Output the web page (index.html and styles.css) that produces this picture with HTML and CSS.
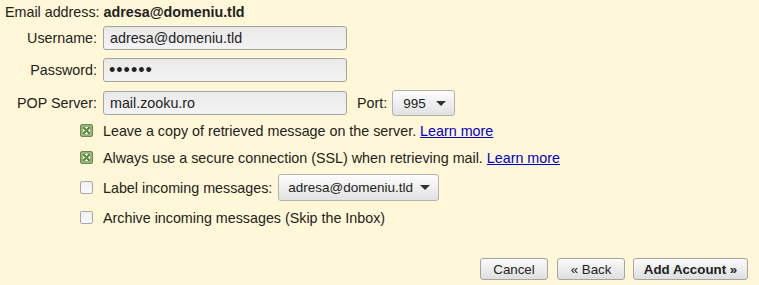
FILE: index.html
```html
<!DOCTYPE html>
<html lang="en">
<head>
    <meta charset="UTF-8">
    <title>Add POP account</title>
    <link rel="stylesheet" href="styles.css">
</head>
<body>
    <div class="form">
        <div class="email">Email address: <b>adresa@domeniu.tld</b></div>

        <div class="fields">
            <label>Username:</label>
            <input class="text" type="text" value="adresa@domeniu.tld">

            <label>Password:</label>
            <input class="text pass" type="password" value="secret">

            <label>POP Server:</label>
            <div class="server">
                <input class="text" type="text" value="mail.zooku.ro">
                <span class="port-label">Port:</span>
                <div class="dropdown port"><span>995</span><i class="arrow"></i></div>
            </div>
        </div>

        <div class="options">
            <div class="option">
                <span class="check checked"></span>
                <span>Leave a copy of retrieved message on the server. <a href="#">Learn more</a></span>
            </div>
            <div class="option">
                <span class="check checked"></span>
                <span>Always use a secure connection (SSL) when retrieving mail. <a href="#">Learn more</a></span>
            </div>
            <div class="option tall">
                <span class="check"></span>
                <span>Label incoming messages:</span>
                <div class="dropdown label-select"><span>adresa@domeniu.tld</span><i class="arrow"></i></div>
            </div>
            <div class="option">
                <span class="check"></span>
                <span>Archive incoming messages (Skip the Inbox)</span>
            </div>
        </div>

        <div class="buttons">
            <button class="btn cancel">Cancel</button>
            <button class="btn back">&laquo; Back</button>
            <button class="btn primary">Add Account &raquo;</button>
        </div>
    </div>
</body>
</html>
```

FILE: styles.css
```css
body {
    margin: 0;
    background-color: #fff7d7;
    font-family: "Liberation Sans", Arial, sans-serif;
    font-size: 14.3px;
    color: #222;
}

.form {
    padding: 4px 11px 0 5px;
}

.email {
    height: 16px;
    line-height: 16px;
}

.fields {
    display: grid;
    grid-template-columns: 92px auto;
    column-gap: 6px;
    row-gap: 8px;
    align-items: center;
    margin-top: 6px;
}

.fields label {
    text-align: right;
}

.text {
    width: 244px;
    height: 24px;
    box-sizing: border-box;
    margin: 0;
    padding: 0 6px;
    border: 1px solid #a3a3a3;
    border-radius: 3px;
    background: linear-gradient(#e9e9e9, #f4f4f4);
    font-family: inherit;
    font-size: 14.3px;
    color: #222;
}

.pass {
    font-size: 18px;
    letter-spacing: 1px;
    padding-left: 5px;
}

.server {
    display: flex;
    align-items: center;
}

.port-label {
    margin-left: 10px;
    margin-right: 5px;
}

.dropdown {
    display: flex;
    align-items: center;
    justify-content: space-between;
    box-sizing: border-box;
    height: 26px;
    padding: 0 8px 0 10px;
    border: 1px solid #b3b3b3;
    border-radius: 3px;
    background: linear-gradient(#fdfdfd, #e2e2e2);
    font-size: 13.5px;
    color: #222;
}

.port {
    width: 63px;
}

.label-select {
    width: 161px;
    height: 27px;
    margin-left: 6px;
    padding-left: 9px;
}

.arrow {
    width: 0;
    height: 0;
    border-left: 5px solid transparent;
    border-right: 5px solid transparent;
    border-top: 5px solid #333;
}

.options {
    margin-top: 1px;
    padding-left: 75px;
}

.option {
    display: flex;
    align-items: center;
    height: 27px;
}

.option.tall {
    height: 33px;
}

.check {
    flex: none;
    width: 13px;
    height: 13px;
    box-sizing: border-box;
    margin-right: 10px;
    border: 1px solid #a8a8a8;
    border-radius: 2px;
    background: linear-gradient(#f1f1f1, #fafafa);
}

.check.checked {
    border-color: #678a4f;
    background: #97b57d;
    position: relative;
}

.check.checked::after {
    content: "";
    position: absolute;
    left: 2px;
    top: 2px;
    width: 7px;
    height: 7px;
    background:
        linear-gradient(45deg, transparent 40%, #5f8a46 40%, #5f8a46 60%, transparent 60%),
        linear-gradient(-45deg, transparent 40%, #5f8a46 40%, #5f8a46 60%, transparent 60%),
        #f4f7ef;
}

a {
    color: #0000cc;
}

.buttons {
    display: flex;
    justify-content: flex-end;
    gap: 8px;
    margin-top: 27px;
}

.btn {
    height: 22px;
    box-sizing: border-box;
    padding: 0;
    border: 1px solid #a5a5a5;
    border-radius: 3px;
    background: linear-gradient(#fbfbfb, #dedede);
    font-family: inherit;
    font-size: 13.3px;
    color: #222;
}

.cancel {
    width: 68px;
    margin-right: 1px;
}

.back {
    width: 68px;
}

.primary {
    width: 115px;
    font-weight: bold;
}
```
